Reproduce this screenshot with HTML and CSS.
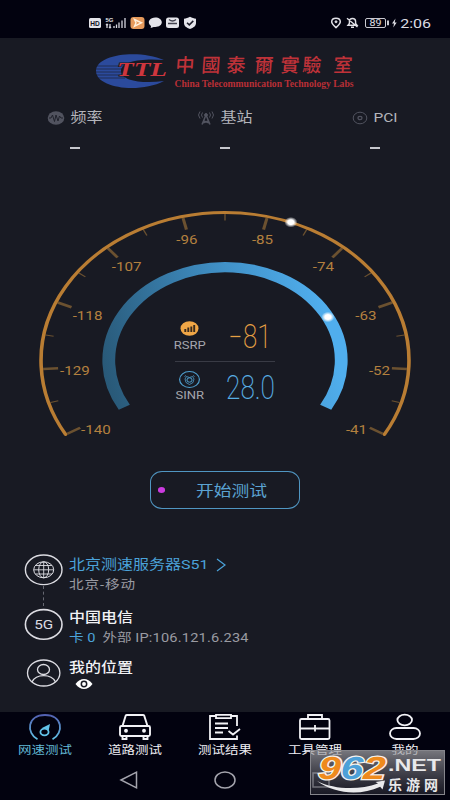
FILE: index.html
```html
<!DOCTYPE html>
<html lang="zh-CN">
<head>
<meta charset="utf-8">
<title>网速测试</title>
<link rel="stylesheet" href="styles.css">
</head>
<body>
<div class="screen">
  <header class="status">
    <svg class="status-left" viewBox="88 15 110 16" width="110" height="16">
      <rect x="89" y="18" width="12" height="10" rx="1.5" fill="#e4e4ea"/>
      <text class="hd" x="95" y="25.8" textLength="9.5" lengthAdjust="spacingAndGlyphs">HD</text>
      <text class="net" x="105.5" y="22.2" textLength="8">5G</text>
      <path d="M107 24v4M106 25.2l1-1 1 1M110 24v4M109 26.800l1 1 1-1M114 28v-2M116.500 28v-3.500M119 28v-5.500M122 28v-7.500M125 28V18" fill="none" stroke="#d8d8e0" stroke-width="1.300"/>
      <rect x="130.500" y="17" width="14" height="12" rx="3" fill="#e69a5c"/>
      <path d="M134.500 19.500l7 3.300-7 3.400 1.500-3.400z" fill="none" stroke="#fff0dc" stroke-width="1.400"/>
      <path d="M155.300 17.500c3.800 0 6.500 2.100 6.500 4.800s-2.700 4.700-6.500 4.700l-1.600-.1-3 1.200.3-2.200c-5-4 -.5-8.400 4.300-8.400z" fill="#e4e4ea"/>
      <rect x="166" y="17.500" width="13" height="10.500" rx="2.500" fill="#e4e4ea"/>
      <path d="M169 19.500q3.500 3 7 0M168 23.500h9" fill="none" stroke="#444450" stroke-width="1.300"/>
      <path d="M190 16.800c2 1.200 4 1.700 6 1.900v4.300c0 3-2.500 4.800-6 6-3.500-1.200-6-3-6-6v-4.300c2-.2 4-.7 6-1.900z" fill="#e4e4ea"/>
      <path d="M187 22.700l2.300 2.200 4-4" fill="none" stroke="#1b1b28" stroke-width="1.500"/>
    </svg>
    <div class="status-right">
      <svg viewBox="333 15 68 16" width="68" height="16" fill="none" stroke="#e0e0e6">
        <path d="M339 27.600c-2.500-2.300-4.300-3.700-4.300-5.800 0-2.200 1.900-3.600 4.300-3.600s4.300 1.400 4.300 3.600c0 2.100-1.800 3.500-4.300 5.800z" stroke-width="1.500"/>
        <circle cx="339" cy="21.800" r="1" fill="#e0e0e6"/>
        <path d="M351 25.200h9l-1.400-1.700v-2c0-4-6.200-4-6.200 0v2zM354 27.300h3M350 18.300l10.500 8.700" stroke-width="1.400"/>
        <rect x="368.500" y="18.500" width="20" height="9" rx="1.500" stroke-width=".9"/>
        <path d="M391 20.500v4.700" stroke-width="1.800"/>
        <path d="M398.500 18.500l-3.500 5h2l-.7 4 3.400-5h-2z" fill="#e0e0e6" stroke="none"/>
        <text class="battery" x="378.500" y="26.200" textLength="12" lengthAdjust="spacingAndGlyphs">89</text>
      </svg>
      <span class="clock squash">2:06</span>
    </div>
  </header>

  <main class="content">
    <svg class="logo" viewBox="90 50 270 42" width="270" height="42">
      <path d="M164 60C139 49 96 54 96 71s43 23 68 10c-21 3-43 0-43-10s22-13 43-11z" fill="#2b4a9c"/>
      <path d="M97 66h28M96 69h27M96 72h27M96 75h28M98 78h27" stroke="#181a23" stroke-width=".6"/>
      <text class="ttl" x="117" y="75.800" textLength="50" lengthAdjust="spacingAndGlyphs">TTL</text>
      <g transform="translate(0 72) skewX(-4)">
        <text class="logo-cn" x="175 201 226 254 280 302 333" y="0">中國泰爾實驗室</text>
      </g>
      <text class="logo-en" x="174.500" y="86.500" textLength="179" lengthAdjust="spacingAndGlyphs">China Telecommunication Technology Labs</text>
    </svg>

    <section class="metrics">
      <div class="metric">
        <div class="metric-name">
          <svg viewBox="0 0 18 14" width="18" height="14"><ellipse cx="9" cy="7" rx="8.300" ry="6.800" fill="#51535f"/><path d="M2 7h2l1.500-3 2 6.500L9 4l2 6 1.500-5L14 7h2" fill="none" stroke="#20222c"/></svg>
          <span class="squash">频率</span>
        </div>
        <i class="dash"></i>
      </div>
      <div class="metric">
        <div class="metric-name">
          <svg viewBox="0 0 18 14" width="18" height="14" fill="none" stroke="#51535f"><path d="M5 13.500L9 4l4 9.500M6.500 10l6 2M11.500 10l-6 2" stroke-width="1.500"/><circle cx="9" cy="4" r="1.400" fill="#51535f"/><path d="M5.500 1.500q-2 2.500 0 5M3 .5q-3 3.500 0 7M12.500 1.500q2 2.500 0 5M15 .5q3 3.500 0 7"/></svg>
          <span class="squash">基站</span>
        </div>
        <i class="dash"></i>
      </div>
      <div class="metric">
        <div class="metric-name">
          <svg viewBox="0 0 16 14" width="16" height="14" fill="none" stroke="#51535f"><ellipse cx="8" cy="7" rx="6.800" ry="5.800"/><ellipse cx="8" cy="7" rx="2" ry="1.700" stroke-width="1.200"/></svg>
          <span class="squash latin">PCI</span>
        </div>
        <i class="dash"></i>
      </div>
    </section>

    <svg class="gauge" viewBox="30 200 390 250" width="390" height="250">
      <defs>
        <linearGradient id="sinr" gradientUnits="userSpaceOnUse" x1="-93" y1="50" x2="93" y2="10">
          <stop offset="0" stop-color="#285775"/><stop offset=".62" stop-color="#4090c6"/><stop offset="1" stop-color="#50aeed"/>
        </linearGradient>
        <radialGradient id="glow"><stop offset=".45" stop-color="#fff"/><stop offset="1" stop-color="#fff" stop-opacity="0"/></radialGradient>
        <path id="major" d="M-146.500 0h12"/>
        <path id="minor" d="M-146.500 0h6.500"/>
      </defs>
      <g transform="translate(225 360.500) scale(1.243 1)">
        <g stroke="#6b5130" stroke-width="2.500">
          <use href="#major" transform="rotate(-30)"/>
          <use href="#major" transform="rotate(-3.330)"/>
          <use href="#major" transform="rotate(23.330)"/>
          <use href="#major" transform="rotate(50)"/>
          <use href="#major" transform="rotate(76.670)"/>
          <use href="#major" transform="rotate(103.330)"/>
          <use href="#major" transform="rotate(130)"/>
          <use href="#major" transform="rotate(156.670)"/>
          <use href="#major" transform="rotate(183.330)"/>
          <use href="#major" transform="rotate(210)"/>
        </g>
        <g stroke="#6b5130" stroke-width="1.100">
          <use href="#minor" transform="rotate(-16.670)"/>
          <use href="#minor" transform="rotate(10)"/>
          <use href="#minor" transform="rotate(36.670)"/>
          <use href="#minor" transform="rotate(63.330)"/>
          <use href="#minor" transform="rotate(90)"/>
          <use href="#minor" transform="rotate(116.670)"/>
          <use href="#minor" transform="rotate(143.330)"/>
          <use href="#minor" transform="rotate(170)"/>
          <use href="#minor" transform="rotate(196.670)"/>
        </g>
        <path d="M-128.200 74A148 148 0 1 1 128.200 74" fill="none" stroke="#b97d33" stroke-width="2.900" stroke-linecap="round"/>
        <path d="M-81 46.750A93.500 93.500 0 1 1 81 46.750" fill="none" stroke="url(#sinr)" stroke-width="10.300"/>
        <g class="scale">
          <text x="-103.800" y="73.400">-140</text>
          <text x="-120.700" y="14.200">-129</text>
          <text x="-110.600" y="-40.100">-118</text>
          <text x="-79.200" y="-89.300">-107</text>
          <text x="-30.600" y="-116.800">-96</text>
          <text x="30.200" y="-116.800">-85</text>
          <text x="79.200" y="-89.300">-74</text>
          <text x="113.400" y="-40.100">-63</text>
          <text x="124.300" y="14.200">-52</text>
          <text x="105.800" y="73.400">-41</text>
        </g>
        <g class="reading-name">
          <text x="-28.400" y="-11.500">RSRP</text>
          <text x="-28.400" y="39">SINR</text>
        </g>
        <circle cx="53" cy="-138.300" r="5.300" fill="url(#glow)"/>
        <circle cx="82.800" cy="-43.500" r="5.300" fill="url(#glow)"/>
      </g>
      <ellipse cx="189.500" cy="328.500" rx="9" ry="7.300" fill="#f0a646"/>
      <path d="M185.300 332v-3M188.300 332v-4.500M191.300 332v-5.500M194.200 332v-7" stroke="#3a2b1c" stroke-width="1.900"/>
      <path d="M175 361.500h100" stroke="#393b45"/>
      <g fill="none" stroke="#4f9fce">
        <ellipse cx="189.500" cy="379.500" rx="9.900" ry="8" stroke-width="1.200"/>
        <ellipse cx="189.500" cy="380" rx="2.600" ry="2.200"/>
        <path d="M186.500 376.500l3 1 3-1 1.500 2.500-1 3.500-3.500 2-3.500-2-1-3.500zM184.500 376.500l1.500-1M194.500 376.500l-1.500-1" stroke-width=".8"/>
      </g>
      <path d="M230.500 336.500h10" stroke="#e6a044" stroke-width="1.300"/>
      <text class="big rsrp" x="243" y="348" textLength="28.500" lengthAdjust="spacingAndGlyphs">81</text>
      <text class="big sinr" x="226" y="398.500" textLength="49" lengthAdjust="spacingAndGlyphs">28.0</text>
    </svg>

    <button class="start"><i class="dot"></i><span class="squash">开始测试</span></button>

    <section class="info">
      <div class="row server">
        <svg viewBox="24 553 40 33" width="40" height="33" fill="none" stroke="#dcdce2">
          <ellipse cx="43.700" cy="569.800" rx="18.300" ry="14.800" stroke-width="1.400"/>
          <ellipse cx="43.700" cy="569.800" rx="10" ry="8"/><ellipse cx="43.700" cy="569.800" rx="5" ry="8"/>
          <path d="M43.700 561.800v16M33.700 569.800h20M35.500 565.500h16.400M35.500 574h16.400" stroke-width=".9"/>
        </svg>
        <div class="lines">
          <div class="title link"><span class="squash">北京测速服务器S51</span><svg viewBox="0 0 10 14" width="10" height="14"><path d="M1 1l8 6-8 6" fill="none" stroke="#4ba3da" stroke-width="1.200"/></svg></div>
          <div class="sub squash operator">北京-移动</div>
        </div>
      </div>
      <div class="row carrier">
        <svg viewBox="24 608 40 33" width="40" height="33">
          <ellipse cx="43.700" cy="624.400" rx="18.300" ry="14.800" fill="none" stroke="#dcdce2" stroke-width="1.600"/>
          <text class="five-g" x="43.700" y="629" textLength="19" lengthAdjust="spacingAndGlyphs">5G</text>
        </svg>
        <div class="lines">
          <div class="title strong squash">中国电信</div>
          <div class="sub squash"><span class="card">卡 0</span>外部 <span class="ip">IP:106.121.6.234</span></div>
        </div>
      </div>
      <div class="row place">
        <svg viewBox="24 657 40 33" width="40" height="33" fill="none" stroke="#dcdce2" stroke-width="1.300">
          <ellipse cx="43.700" cy="673" rx="16.200" ry="13"/><ellipse cx="43.500" cy="669.500" rx="6" ry="5"/>
          <path d="M32 682c2-4 6-6.300 11.700-6.300S53.500 678 55.500 682"/>
        </svg>
        <div class="lines">
          <div class="title strong squash">我的位置</div>
          <svg class="eye" viewBox="0 0 18 12" width="18" height="12"><path d="M.5 6C3 2.500 6 1 9 1s6 1.500 8.500 5C15 9.500 12 11 9 11S3 9.500.5 6z" fill="#fff"/><circle cx="9" cy="6" r="2.700" fill="none" stroke="#181a23" stroke-width="1.500"/></svg>
        </div>
      </div>
    </section>
  </main>

  <nav class="tabs">
    <div class="tab active">
      <svg viewBox="28 713 34 28" width="34" height="28" fill="none">
        <defs><linearGradient id="dial" x1="0" y1="0" x2="0" y2="1"><stop offset="0" stop-color="#5260b0"/><stop offset="1" stop-color="#62c3e8"/></linearGradient></defs>
        <path d="M37.500 739.300C26 733 27 715 45 715s19 18 7.500 24.300" stroke="url(#dial)" stroke-width="1.800"/>
        <ellipse cx="44.500" cy="732" rx="4.100" ry="3.400" stroke="#62c3e8" stroke-width="1.800"/><path d="M42 728l8-4-1.500 7.500c-1-3-3-4-6.500-3.500z" fill="#62c3e8"/>
      </svg>
      <span class="squash">网速测试</span>
    </div>
    <div class="tab">
      <svg viewBox="118 713 34 28" width="34" height="28" fill="none" stroke="#f2f2f6" stroke-width="1.900">
        <path d="M122.500 726l3.200-10.300q.3-.7 1.200-.7h16q1 0 1.300.7l3.300 10.300"/><rect x="120" y="726" width="30" height="10" rx="1.500"/><path d="M122.500 736v3h4v-3M143.500 736v3h4v-3"/><circle cx="126" cy="730.700" r="1" fill="#fff"/><circle cx="144" cy="730.700" r="1" fill="#fff"/>
      </svg>
      <span class="squash">道路测试</span>
    </div>
    <div class="tab">
      <svg viewBox="208 713 34 28" width="34" height="28" fill="none" stroke="#f2f2f6" stroke-width="1.800">
        <path d="M216 716h-6v23h27v-3.500M231 716h6v10M216 714.800h15v3.400h-15zM215 723.500h13M215 728h13M215 732.500h8M228.500 731l4.500 3.500 7-5.500"/>
      </svg>
      <span class="squash">测试结果</span>
    </div>
    <div class="tab">
      <svg viewBox="298 713 34 28" width="34" height="28" fill="none" stroke="#f2f2f6" stroke-width="1.800">
        <rect x="300" y="719" width="29.500" height="20" rx="1.500"/><path d="M308 719v-4h14v4M300 728.500h29.500M315 725v6.500"/>
      </svg>
      <span class="squash">工具管理</span>
    </div>
    <div class="tab">
      <svg viewBox="388 713 34 28" width="34" height="28" fill="none" stroke="#f2f2f6" stroke-width="1.800">
        <ellipse cx="404.700" cy="720" rx="7.300" ry="5.300"/><rect x="390" y="728" width="30" height="11" rx="6.500" ry="5.500"/>
      </svg>
      <span class="squash">我的</span>
    </div>
  </nav>

  <footer class="keys">
    <svg viewBox="0 0 24 20" width="24" height="20"><path d="M4 10L19.500 2.200v15.600z"/></svg>
    <svg viewBox="0 0 24 20" width="24" height="20"><ellipse cx="12" cy="10" rx="10" ry="8"/></svg>
    <svg viewBox="0 0 24 20" width="24" height="20"><rect x="4" y="3" width="16" height="14"/></svg>
  </footer>

  <svg class="watermark" viewBox="310 750 135 45" width="135" height="45">
    <defs><linearGradient id="plate" x1="0" y1="0" x2="0" y2="1"><stop offset="0" stop-color="#a4a4a8" stop-opacity=".72"/><stop offset="1" stop-color="#30303a" stop-opacity=".5"/></linearGradient></defs>
    <rect x="310.500" y="750.500" width="134" height="44" fill="url(#plate)" stroke="#85858b"/>
    <path d="M317 781C335 790 360 790 378 783.500l-2.500-1.500 9.500-1.500-2.500 9-2.300-2.800C360 796 335 794 317 781z" fill="#eaeaec"/>
    <g transform="translate(318 778.500) skewX(-3)">
      <text class="nums" x="0" y="0" textLength="67" lengthAdjust="spacingAndGlyphs"><tspan class="orange">9</tspan><tspan class="blue">6</tspan><tspan class="orange">2</tspan></text>
    </g>
    <text class="dotnet" x="388" y="770.500" textLength="53" lengthAdjust="spacingAndGlyphs">.NET</text>
    <text class="site" x="388" y="789.500" textLength="50">乐游网</text>
  </svg>
</div>
</body>
</html>
```
FILE: styles.css
```css
* { box-sizing: border-box; }

body {
  margin: 0;
  background: #181a23;
  font-family: Roboto, "Noto Sans CJK SC", sans-serif;
  color: #b4b5bb;
}

.screen {
  position: relative;
  display: flex;
  flex-direction: column;
  width: 450px;
  height: 800px;
  overflow: hidden;
}

.squash {
  display: inline-block;
  transform: scaleY(.82);
  white-space: nowrap;
}

.status {
  display: flex;
  justify-content: space-between;
  height: 38px;
  padding: 15px 19px 0 88px;
  background: #02020f;
}
.status-right { display: flex; gap: 2px; }
.clock { font-size: 16px; line-height: 16px; color: #dcdce2; }
.hd { font: bold 7.500px "Liberation Sans", sans-serif; text-anchor: middle; fill: #11111c; }
.net { font: bold 6px "Liberation Sans", sans-serif; fill: #e0e0e6; }
.battery { font-size: 8.800px; text-anchor: middle; fill: #e0e0e6; stroke: none; }

.content { display: flex; flex-direction: column; height: 674px; }
.logo { flex: none; margin: 12px 0 0 90px; }
.ttl { font: italic bold 18px "Liberation Serif", serif; fill: #cf363e; stroke: #181a23; stroke-width: 1px; paint-order: stroke; }
.logo-cn { font: 500 19px "Noto Sans CJK TC", sans-serif; fill: #bf3239; }
.logo-en { font: bold 9.500px "Liberation Serif", serif; fill: #b92f36; }

.metrics { display: grid; grid-template-columns: repeat(3, 150px); margin-top: 14px; height: 94px; }
.metric { display: flex; flex-direction: column; align-items: center; }
.metric-name { display: flex; align-items: center; gap: 5px; height: 23px; font-size: 16px; line-height: 20px; }
.metric-name .latin { font-size: 15.500px; }
.dash { width: 10px; height: 1.500px; margin-top: 18px; background: #c6c7cc; }

.gauge { flex: none; margin-left: 30px; }
.scale text { font-size: 12.200px; text-anchor: middle; fill: #b3803f; }
.reading-name text { font-size: 10.500px; text-anchor: middle; fill: #a5a6ad; }
.big { font-size: 33px; font-weight: 200; }
.rsrp { fill: #e6a044; }
.sinr { fill: #58aee4; }

.start {
  display: flex;
  align-items: center;
  flex: none;
  width: 150px;
  height: 38px;
  margin: 21px 0 0 150px;
  padding: 0 0 0 7px;
  gap: 31px;
  border: 1.500px solid #5096c2;
  border-radius: 12px / 11px;
  background: none;
  color: #5ba3d2;
  font: 17.800px Roboto, "Noto Sans CJK SC", sans-serif;
}
.start .squash { margin-top: -2px; }
.dot { width: 7px; height: 5.500px; border-radius: 50%; background: #cb3bdf; }

.info { position: relative; display: flex; flex-direction: column; padding: 44px 0 0 24px; }
.row { display: flex; gap: 5px; }
.row > svg { flex: none; }
.server { height: 55px; }
.server::after {
  content: "";
  position: absolute;
  left: 43px;
  top: 77px;
  height: 20px;
  border-left: 1px dashed #666872;
}
.server .lines { padding-top: 1px; }
.carrier { height: 49px; }
.carrier .lines { margin-top: -1px; }
.lines { display: flex; flex-direction: column; align-items: flex-start; }
.title { display: flex; align-items: center; gap: 7px; height: 22px; font-size: 16px; line-height: 22px; }
.title.link { color: #4ba3da; }
.title.strong { color: #f2f2f5; font-weight: 500; }
.sub { height: 19px; font-size: 14.600px; line-height: 19px; color: #9a9ba2; }
.operator { letter-spacing: .9px; }
.card { margin-right: 7px; color: #4ba3da; }
.ip { letter-spacing: .2px; }
.five-g { font-size: 13px; text-anchor: middle; fill: #dcdce2; }
.eye { margin: -1px 0 0 6px; }

.tabs { display: grid; grid-template-columns: repeat(5, 90px); height: 48px; padding-top: 1px; background: #02020f; }
.tab { display: flex; flex-direction: column; align-items: center; font-size: 13.500px; line-height: 19px; color: #f0f0f5; }
.tab svg { flex: none; }
.active { color: #63b9d6; }

.keys { display: flex; justify-content: center; gap: 72px; height: 40px; padding-top: 10px; background: #02020f; }
.keys svg { fill: none; stroke: #a4a4ad; stroke-width: 1.500px; }

.watermark { position: absolute; left: 310px; top: 750px; overflow: visible; }
.nums { font: italic bold 32px "Liberation Sans", sans-serif; stroke: #f6f2ec; stroke-width: 2.500px; paint-order: stroke; }
.orange { fill: #ee8a1d; }
.blue { fill: #4da0d8; }
.dotnet { font: bold 16px "Liberation Sans", sans-serif; fill: #e8e8ea; }
.site { font: bold 14px "Liberation Sans", "Noto Sans CJK SC", sans-serif; fill: #e8e8ea; }
```
